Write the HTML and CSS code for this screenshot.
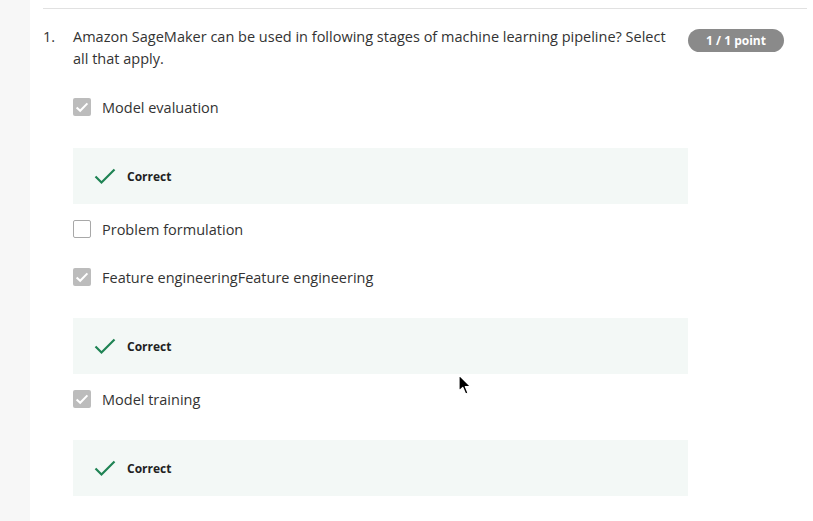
FILE: index.html
```html
<!DOCTYPE html>
<html>
<head>
<meta charset="utf-8">
<link rel="stylesheet" href="styles.css">
</head>
<body>
<div class="page">
  <aside class="rail"></aside>
  <main class="main">
    <div class="rule"></div>
    <section class="question">
      <div class="q-head">
        <span class="q-num">1.</span>
        <div class="q-text">Amazon SageMaker can be used in following stages of machine learning pipeline? Select all that apply.</div>
        <span class="badge">1 / 1 point</span>
      </div>
      <div class="options">
        <div class="option">
          <span class="box checked"><svg viewBox="0 0 18 18" width="18" height="18"><path d="M3.6 9.4 L7.2 12.8 L14.4 5.4" fill="none" stroke="#fff" stroke-width="2"/></svg></span>
          <span class="label">Model evaluation</span>
        </div>
        <div class="feedback">
          <svg class="tick" viewBox="0 0 22 18" width="22" height="18"><path d="M1.5 9.5 L7.5 15.5 L20.5 2.5" fill="none" stroke="#1f8354" stroke-width="2.2"/></svg>
          <span class="fb-text">Correct</span>
        </div>
        <div class="option">
          <span class="box"></span>
          <span class="label">Problem formulation</span>
        </div>
        <div class="option">
          <span class="box checked"><svg viewBox="0 0 18 18" width="18" height="18"><path d="M3.6 9.4 L7.2 12.8 L14.4 5.4" fill="none" stroke="#fff" stroke-width="2"/></svg></span>
          <span class="label">Feature engineeringFeature engineering</span>
        </div>
        <div class="feedback">
          <svg class="tick" viewBox="0 0 22 18" width="22" height="18"><path d="M1.5 9.5 L7.5 15.5 L20.5 2.5" fill="none" stroke="#1f8354" stroke-width="2.2"/></svg>
          <span class="fb-text">Correct</span>
        </div>
        <div class="option">
          <span class="box checked"><svg viewBox="0 0 18 18" width="18" height="18"><path d="M3.6 9.4 L7.2 12.8 L14.4 5.4" fill="none" stroke="#fff" stroke-width="2"/></svg></span>
          <span class="label">Model training</span>
        </div>
        <div class="feedback">
          <svg class="tick" viewBox="0 0 22 18" width="22" height="18"><path d="M1.5 9.5 L7.5 15.5 L20.5 2.5" fill="none" stroke="#1f8354" stroke-width="2.2"/></svg>
          <span class="fb-text">Correct</span>
        </div>
      </div>
    </section>
  </main>
</div>
<svg class="cursor" viewBox="0 0 14 22" width="14" height="22"><path d="M1 1 L1 17 L4.8 13.4 L7.6 20 L10 19 L7.3 12.6 L12.5 12.6 Z" fill="#000" stroke="#fff" stroke-width="1.2" stroke-linejoin="round"/></svg>
</body>
</html>
```
FILE: styles.css
```css
html, body {
  margin: 0;
  padding: 0;
  background: #fff;
}
body {
  font-family: "Open Sans", "Noto Sans", sans-serif;
  color: #333;
  width: 813px;
  height: 521px;
  overflow: hidden;
  position: relative;
}
.page {
  display: flex;
  height: 521px;
}
.rail {
  width: 30px;
  flex: none;
  background: #f7f7f7;
}
.main {
  flex: 1;
  padding: 8px 6px 0 13px;
}
.rule {
  height: 1px;
  background: #e1e1e1;
}
.question {
  padding-top: 17px;
}
.q-head {
  display: flex;
  align-items: flex-start;
}
.q-num {
  width: 30px;
  flex: none;
  font-size: 14.5px;
  line-height: 22px;
}
.q-text {
  width: 600px;
  flex: none;
  font-size: 14.5px;
  line-height: 22px;
}
.badge {
  margin-left: 15px;
  margin-top: 3px;
  width: 96px;
  height: 23px;
  border-radius: 12px;
  background: #8a8a8a;
  color: #fff;
  font-size: 12px;
  font-weight: 700;
  display: flex;
  align-items: center;
  justify-content: center;
}
.options {
  margin-left: 30px;
  width: 615px;
  padding-top: 25px;
  display: flex;
  flex-direction: column;
}
.option {
  display: flex;
  align-items: center;
  height: 24px;
  margin-bottom: 24px;
}
.box {
  width: 18px;
  height: 18px;
  box-sizing: border-box;
  border: 1.5px solid #a8a8a8;
  border-radius: 2px;
  flex: none;
  display: flex;
}
.box.checked {
  border: none;
  background: #bcbcbc;
}
.label {
  margin-left: 11px;
  font-size: 14.5px;
  line-height: 24px;
  position: relative;
  top: 1px;
}
.option:has(+ .feedback) {
  margin-bottom: 29px;
}
.feedback {
  height: 56px;
  background: #f3f8f6;
  display: flex;
  align-items: center;
  padding-left: 21px;
  margin-bottom: 13px;
}
.tick {
  flex: none;
}
.fb-text {
  margin-left: 11px;
  font-size: 12px;
  font-weight: 700;
  color: #222;
}
.cursor {
  position: absolute;
  left: 458px;
  top: 374px;
}
```
